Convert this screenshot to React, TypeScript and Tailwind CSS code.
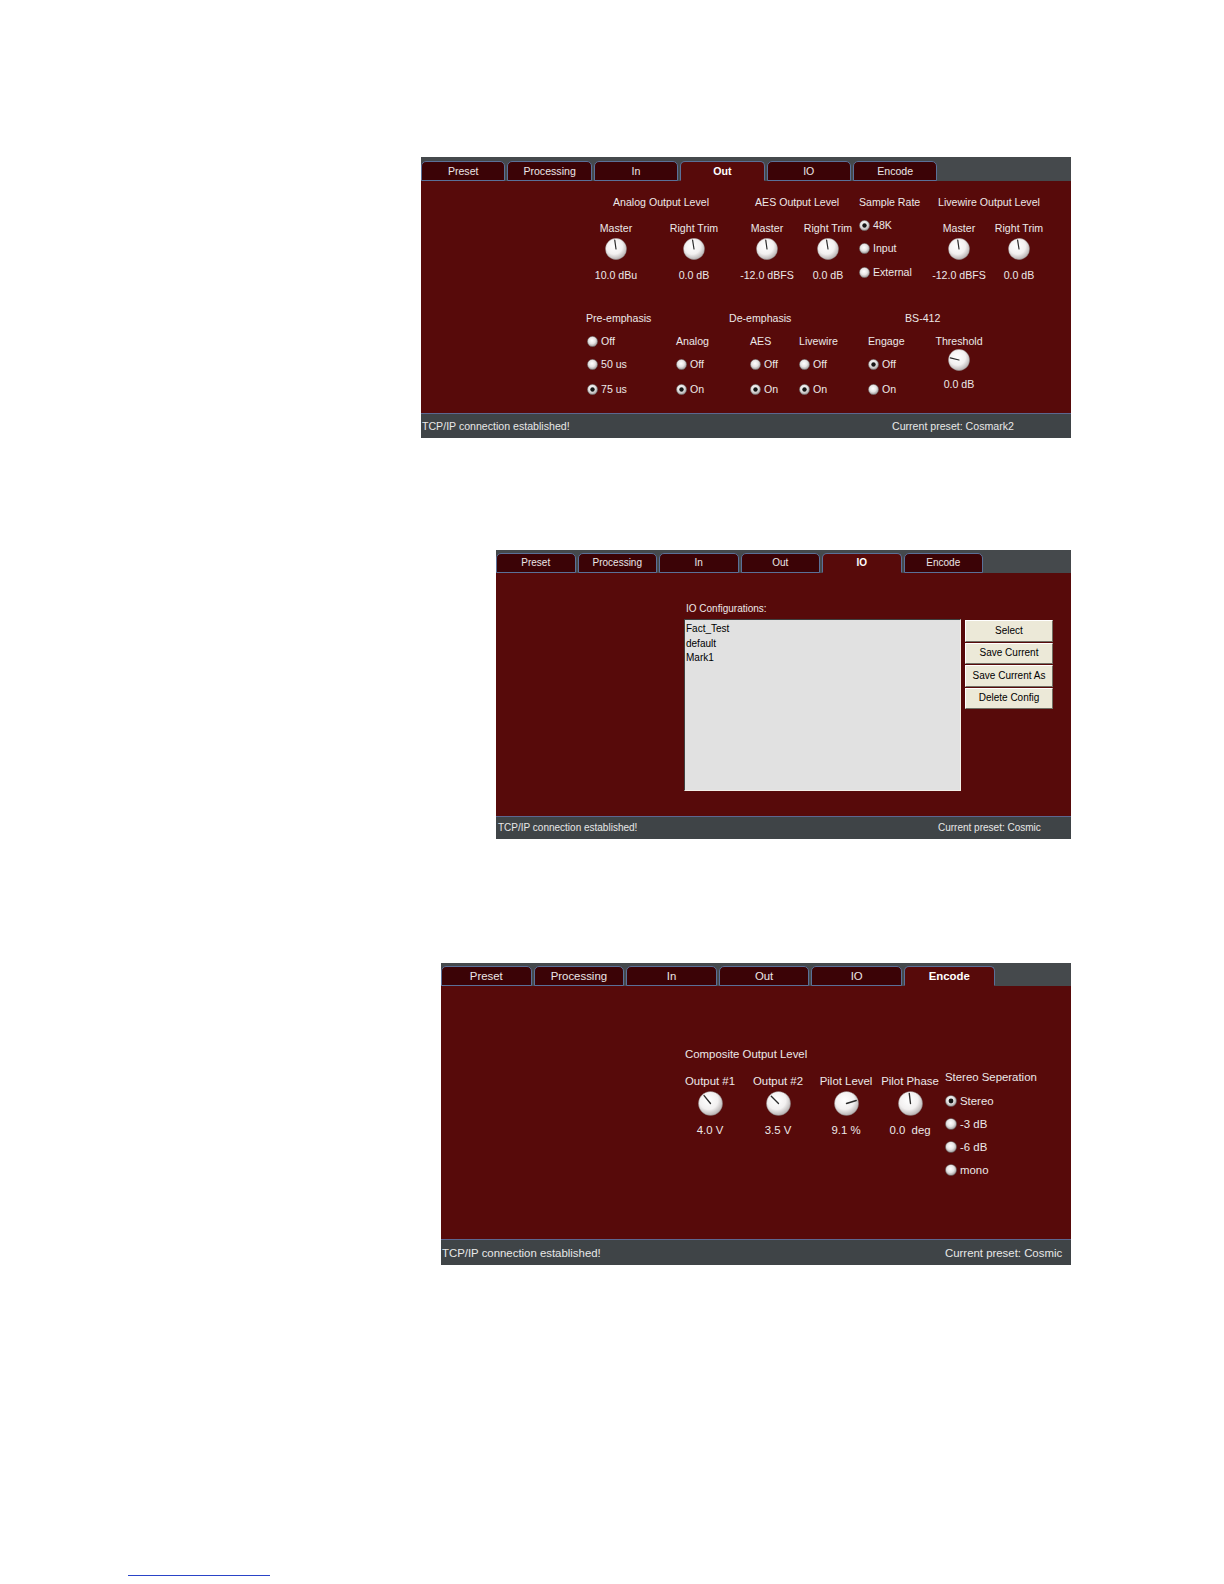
import { useId } from "react";

const FONT = { fontFamily: '"Liberation Sans", Arial, sans-serif' };

function Knob({ size, angle }: { size: number; angle: number }) {
  const id = useId();
  const rad = (angle * Math.PI) / 180;
  const x2 = 12 + 9.8 * Math.sin(rad);
  const y2 = 12 - 9.8 * Math.cos(rad);
  return (
    <svg width={size} height={size} viewBox="0 0 24 24" className="block">
      <defs>
        <radialGradient id={id} cx="42%" cy="36%" r="70%">
          <stop offset="0" stopColor="#ffffff" />
          <stop offset="0.55" stopColor="#f2f0f0" />
          <stop offset="1" stopColor="#a9a4a4" />
        </radialGradient>
      </defs>
      <circle cx="12" cy="12" r="11.6" fill={`url(#${id})`} stroke="#7a6a6a" strokeWidth="0.4" />
      <line x1="12" y1="12" x2={x2} y2={y2} stroke="#2b2b2b" strokeWidth="1.3" strokeLinecap="round" />
    </svg>
  );
}

function RadioDot({ size, checked }: { size: number; checked?: boolean }) {
  const id = useId();
  return (
    <svg width={size} height={size} viewBox="0 0 12 12" className="block shrink-0">
      <defs>
        <radialGradient id={id} cx="45%" cy="40%" r="65%">
          <stop offset="0" stopColor="#ffffff" />
          <stop offset="0.5" stopColor="#e6e4e4" />
          <stop offset="1" stopColor="#8e8a8a" />
        </radialGradient>
      </defs>
      <circle cx="6" cy="6" r="5.6" fill={`url(#${id})`} stroke="#5a4e4e" strokeWidth="0.5" />
      {checked && <circle cx="6" cy="6" r="2.4" fill="#151515" />}
    </svg>
  );
}

function Radio({ label, checked, size, className }: { label: string; checked?: boolean; size: number; className: string }) {
  return (
    <div className={`flex items-center gap-[3px] whitespace-nowrap ${className}`}>
      <RadioDot size={size} checked={checked} />
      <span>{label}</span>
    </div>
  );
}

function Tabs({ active, tabClass }: { active: string; tabClass: string }) {
  const names = ["Preset", "Processing", "In", "Out", "IO", "Encode"];
  return (
    <>
      {names.map((n) => (
        <div
          key={n}
          className={`${tabClass} shrink-0 flex items-center justify-center rounded-t-[5px] border border-[#5a7098] ${
            n === active
              ? "bg-[#570a0a] border-b-[#570a0a] font-bold text-white"
              : "bg-[#3b0306] text-[#ebe6e6]"
          }`}
        >
          {n}
        </div>
      ))}
    </>
  );
}

function OutPanel() {
  const knob = "w-[56px] shrink-0 flex flex-col items-center mt-[13px]";
  return (
    <div className="ml-[421px] pt-[157px] w-[650px] text-[10.6px] leading-[13px] text-[#ece8e8]">
      <div className="h-[24px] bg-[#45494c] flex items-end gap-[2px]">
        <Tabs active="Out" tabClass="w-[84.4px] h-[20px]" />
      </div>
      <div className="h-[232px] bg-[#570a0a] pt-[14.5px]">
        <div className="flex h-[13px] whitespace-nowrap">
          <span className="ml-[192px] w-[142px] shrink-0">Analog Output Level</span>
          <span className="w-[104px] shrink-0">AES Output Level</span>
          <span className="w-[79px] shrink-0">Sample Rate</span>
          <span>Livewire Output Level</span>
        </div>
        <div className="flex items-start whitespace-nowrap">
          {[
            { l: "Master", v: "10.0 dBu", a: -8, m: "ml-[167px]" },
            { l: "Right Trim", v: "0.0 dB", a: -9, m: "ml-[22px]" },
            { l: "Master", v: "-12.0 dBFS", a: -8, m: "ml-[17px]" },
            { l: "Right Trim", v: "0.0 dB", a: -9, m: "ml-[5px]" },
          ].map((k, i) => (
            <div key={i} className={`${knob} ${k.m}`}>
              <span className="h-[13px]">{k.l}</span>
              <div className="mt-[3.5px]">
                <Knob size={22} angle={k.a} />
              </div>
              <span className="mt-[8.5px] h-[13px]">{k.v}</span>
            </div>
          ))}
          <div className="ml-[3px] w-[72px] shrink-0 mt-[5px]">
            <Radio size={11} checked label="48K" className="h-[23.5px]" />
            <Radio size={11} label="Input" className="h-[23.5px]" />
            <Radio size={11} label="External" className="h-[23.5px]" />
          </div>
          {[
            { l: "Master", v: "-12.0 dBFS", a: -8, m: "" },
            { l: "Right Trim", v: "0.0 dB", a: -9, m: "ml-[4px]" },
          ].map((k, i) => (
            <div key={i} className={`${knob} ${k.m}`}>
              <span className="h-[13px]">{k.l}</span>
              <div className="mt-[3.5px]">
                <Knob size={22} angle={k.a} />
              </div>
              <span className="mt-[8.5px] h-[13px]">{k.v}</span>
            </div>
          ))}
        </div>

        <div className="flex h-[13px] mt-[27.5px] whitespace-nowrap">
          <span className="ml-[165px] w-[143px] shrink-0">Pre-emphasis</span>
          <span className="w-[176px] shrink-0">De-emphasis</span>
          <span>BS-412</span>
        </div>
        <div className="flex items-start mt-[5px] whitespace-nowrap">
          <div className="ml-[166px] w-[89px] shrink-0">
            <Radio size={11} label="Off" className="h-[23px]" />
            <Radio size={11} label="50 us" className="h-[23px]" />
            <Radio size={11} checked label="75 us" className="h-[27px]" />
          </div>
          {[
            { t: "Analog", on: true, w: "w-[74px]" },
            { t: "AES", on: true, w: "w-[49px]" },
            { t: "Livewire", on: true, w: "w-[69px]" },
            { t: "Engage", on: false, w: "w-[63px]" },
          ].map((c) => (
            <div key={c.t} className={`${c.w} shrink-0`}>
              <div className="h-[23px] flex items-center">{c.t}</div>
              <Radio size={11} checked={!c.on} label="Off" className="h-[23px]" />
              <Radio size={11} checked={c.on} label="On" className="h-[27px]" />
            </div>
          ))}
          <div className="w-[56px] shrink-0 flex flex-col items-center">
            <span className="mt-[5px] h-[13px]">Threshold</span>
            <div className="mt-[1.5px]">
              <Knob size={22} angle={-76} />
            </div>
            <span className="mt-[6.5px] h-[13px]">0.0 dB</span>
          </div>
        </div>
      </div>
      <div className="h-[25px] bg-[#3f4447] border-t border-[#5c6790] flex items-center text-[#e8e8e8] whitespace-nowrap">
        <span className="w-[471px] shrink-0 pl-[1px]">TCP/IP connection established!</span>
        <span>Current preset: Cosmark2</span>
      </div>
    </div>
  );
}

function IoPanel() {
  const btn =
    "h-[21.5px] bg-[#ece9d8] border border-t-white border-l-white border-b-[#716f64] border-r-[#716f64] flex items-center justify-center text-black";
  return (
    <div className="ml-[496px] mt-[112px] w-[575px] text-[10px] leading-[12px] text-[#ece8e8]">
      <div className="h-[23px] bg-[#45494c] flex items-end gap-[2px]">
        <Tabs active="IO" tabClass="w-[79.5px] h-[20px]" />
      </div>
      <div className="h-[243px] bg-[#570a0a] pt-[30px]">
        <div className="pl-[190px] h-[12px]">IO Configurations:</div>
        <div className="flex items-start mt-[4px]">
          <div className="ml-[188px] w-[277px] h-[172px] shrink-0 bg-[#e1e1e1] border border-t-[#404040] border-l-[#404040] border-b-[#f4f0e8] border-r-[#f4f0e8] pt-[2px] pl-[1px] text-black leading-[14.5px]">
            <div>Fact_Test</div>
            <div>default</div>
            <div>Mark1</div>
          </div>
          <div className="ml-[4px] mt-[1px] w-[88px] shrink-0 flex flex-col gap-[1px] whitespace-nowrap">
            <div className={btn}>Select</div>
            <div className={btn}>Save Current</div>
            <div className={btn}>Save Current As</div>
            <div className={btn}>Delete Config</div>
          </div>
        </div>
      </div>
      <div className="h-[23px] bg-[#3f4447] border-t border-[#5c6790] flex items-center text-[#e8e8e8] whitespace-nowrap">
        <span className="w-[442px] shrink-0 pl-[2px]">TCP/IP connection established!</span>
        <span>Current preset: Cosmic</span>
      </div>
    </div>
  );
}

function EncodePanel() {
  const knobs = [
    { l: "Output #1", v: "4.0 V", a: -39, m: "" },
    { l: "Output #2", v: "3.5 V", a: -45, m: "ml-[4px]" },
    { l: "Pilot Level", v: "9.1 %", a: 73, m: "ml-[4px]" },
    { l: "Pilot Phase", v: "0.0  deg", a: -7, m: "" },
  ];
  return (
    <div className="ml-[441px] mt-[124px] w-[630px] text-[11.4px] leading-[14px] text-[#ece8e8]">
      <div className="h-[23px] bg-[#45494c] flex items-end gap-[2px]">
        <Tabs active="Encode" tabClass="w-[90.6px] h-[20px]" />
      </div>
      <div className="h-[253px] bg-[#570a0a] pt-[61px] flex items-start whitespace-nowrap">
        <div className="ml-[237px] flex flex-col">
          <span className="pl-[7px] h-[14px]">Composite Output Level</span>
          <div className="flex mt-[13px]">
            {knobs.map((k) => (
              <div key={k.l} className={`w-[64px] shrink-0 flex flex-col items-center ${k.m}`}>
                <span className="h-[14px]">{k.l}</span>
                <div className="mt-[2.5px]">
                  <Knob size={25} angle={k.a} />
                </div>
                <span className="mt-[7.5px] h-[14px] whitespace-pre">{k.v}</span>
              </div>
            ))}
          </div>
        </div>
        <div className="ml-[3px] mt-[23px] flex flex-col">
          <span className="h-[14px]">Stereo Seperation</span>
          <div className="mt-[5.5px]">
            <Radio size={12} checked label="Stereo" className="h-[23px]" />
            <Radio size={12} label="-3 dB" className="h-[23px]" />
            <Radio size={12} label="-6 dB" className="h-[23px]" />
            <Radio size={12} label="mono" className="h-[23px]" />
          </div>
        </div>
      </div>
      <div className="h-[26px] bg-[#3f4447] border-t border-[#5c6790] flex items-center text-[#e8e8e8] whitespace-nowrap">
        <span className="w-[504px] shrink-0 pl-[1px]">TCP/IP connection established!</span>
        <span>Current preset: Cosmic</span>
      </div>
    </div>
  );
}

export default function App() {
  return (
    <div className="w-[1224px] h-[1584px] bg-white overflow-hidden" style={FONT}>
      <OutPanel />
      <IoPanel />
      <EncodePanel />
      <div className="ml-[128px] mt-[310px] w-[142px] h-px bg-[#2a44c8]" />
    </div>
  );
}
